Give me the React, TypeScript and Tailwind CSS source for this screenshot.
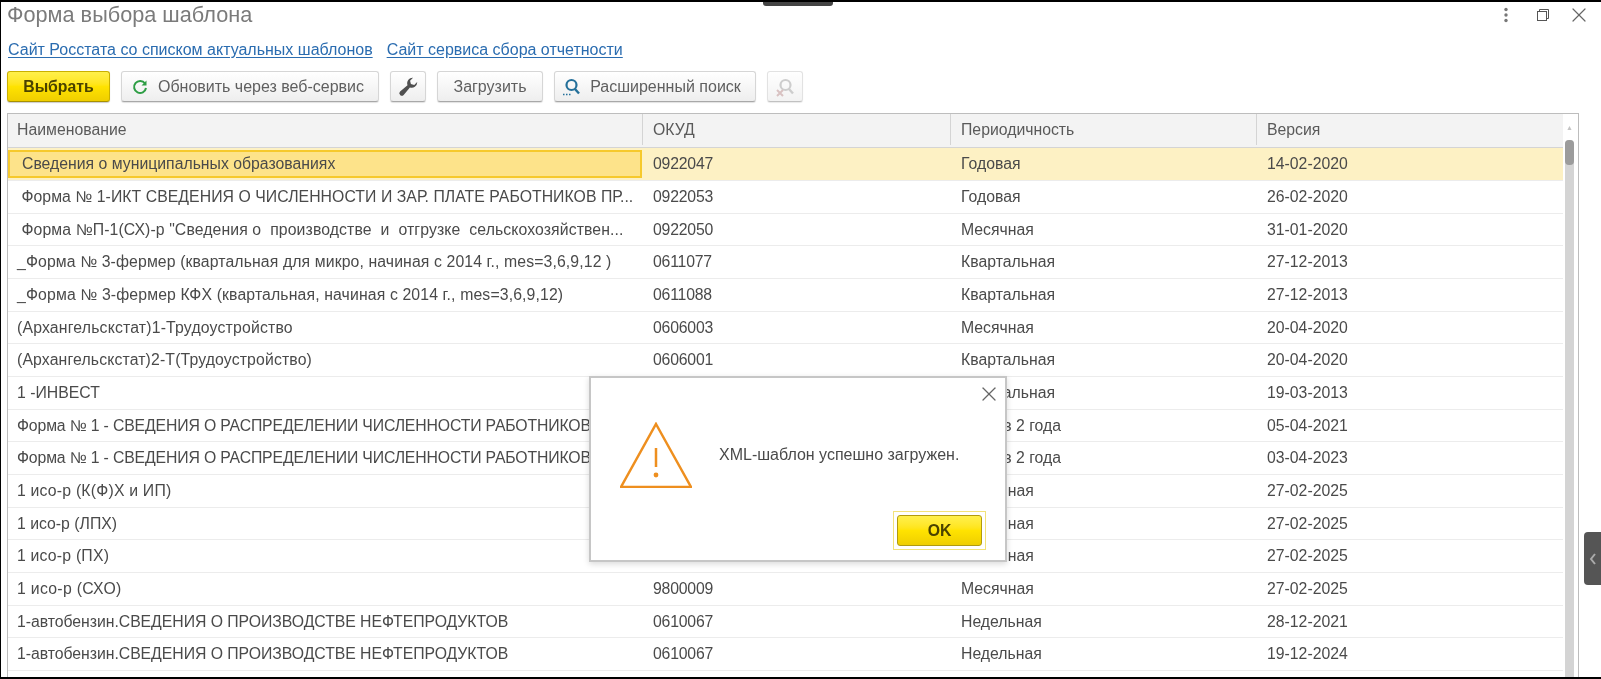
import { X } from 'lucide-react';

const rows = [
  { name: ' Форма № 1-ИКТ СВЕДЕНИЯ О ЧИСЛЕННОСТИ И ЗАР. ПЛАТЕ РАБОТНИКОВ ПР...', code: '0922053', period: 'Годовая', version: '26-02-2020', fit: 'tracking-[0.05px]' },
  { name: ' Форма №П-1(СХ)-р "Сведения о  производстве  и  отгрузке  сельскохозяйствен...', code: '0922050', period: 'Месячная', version: '31-01-2020', fit: 'tracking-[0.1px]' },
  { name: '_Форма № 3-фермер (квартальная для микро, начиная с 2014 г., mes=3,6,9,12 )', code: '0611077', period: 'Квартальная', version: '27-12-2013', fit: 'tracking-[0.11px]' },
  { name: '_Форма № 3-фермер КФХ (квартальная, начиная с 2014 г., mes=3,6,9,12)', code: '0611088', period: 'Квартальная', version: '27-12-2013', fit: 'tracking-[0.13px]' },
  { name: '(Архангельскстат)1-Трудоустройство', code: '0606003', period: 'Месячная', version: '20-04-2020', fit: 'tracking-[0.18px]' },
  { name: '(Архангельскстат)2-Т(Трудоустройство)', code: '0606001', period: 'Квартальная', version: '20-04-2020', fit: 'tracking-[0.14px]' },
  { name: '1 -ИНВЕСТ', code: '0610001', period: 'Квартальная', version: '19-03-2013', fit: '' },
  { name: 'Форма № 1 - СВЕДЕНИЯ О РАСПРЕДЕЛЕНИИ ЧИСЛЕННОСТИ РАБОТНИКОВ', code: '0606010', period: '1 раз в 2 года', version: '05-04-2021', fit: 'tracking-[-0.15px]' },
  { name: 'Форма № 1 - СВЕДЕНИЯ О РАСПРЕДЕЛЕНИИ ЧИСЛЕННОСТИ РАБОТНИКОВ', code: '0606010', period: '1 раз в 2 года', version: '03-04-2023', fit: 'tracking-[-0.15px]' },
  { name: '1 исо-р (К(Ф)Х и ИП)', code: '9800009', period: 'Месячная', version: '27-02-2025', fit: 'tracking-[0.2px]' },
  { name: '1 исо-р (ЛПХ)', code: '9800009', period: 'Месячная', version: '27-02-2025', fit: '' },
  { name: '1 исо-р (ПХ)', code: '9800009', period: 'Месячная', version: '27-02-2025', fit: 'tracking-[0.2px]' },
  { name: '1 исо-р (СХО)', code: '9800009', period: 'Месячная', version: '27-02-2025', fit: 'tracking-[0.3px]' },
  { name: '1-автобензин.СВЕДЕНИЯ О ПРОИЗВОДСТВЕ НЕФТЕПРОДУКТОВ', code: '0610067', period: 'Недельная', version: '28-12-2021', fit: 'tracking-[-0.04px]' },
  { name: '1-автобензин.СВЕДЕНИЯ О ПРОИЗВОДСТВЕ НЕФТЕПРОДУКТОВ', code: '0610067', period: 'Недельная', version: '19-12-2024', fit: 'tracking-[-0.04px]' },
  { name: '', code: '', period: '', version: '', fit: '' },
];

const btn = 'h-[31px] flex items-center justify-center rounded-[3px] border border-[#d6d6d6] border-b-[#a8a8a8] bg-gradient-to-b from-white to-[#eeeeee] shadow-[0_1px_1px_rgba(0,0,0,0.12)] text-[16px] text-[#5f5f5f]';
const yellow = 'rounded-[3px] bg-gradient-to-b from-[#fff04a] via-[#ffe300] to-[#efce00] font-bold text-[15.8px] text-[#4a4200]';

function WarningIcon() {
  return (
    <svg width="72" height="66" viewBox="0 0 72 66" fill="none">
      <path d="M36 2 L71 65 L1 65 Z" stroke="#ee8f1f" strokeWidth="2.5" />
      <path d="M36 26 V45" stroke="#ee8f1f" strokeWidth="2.5" />
      <circle cx="36" cy="53" r="2.4" fill="#ee8f1f" />
    </svg>
  );
}

function SearchIcon({ muted }: { muted?: boolean }) {
  const c = muted ? '#b9b9b9' : '#24709a';
  return (
    <svg width="20" height="20" viewBox="0 0 20 20" fill="none">
      <circle cx="10.5" cy="8" r="5" stroke={c} strokeWidth="2.2" />
      <path d="M14 12 L18 16.5" stroke={c} strokeWidth="2.4" />
      {muted ? (
        <path d="M2 13 L8 19 M8 13 L2 19" stroke="#c9a9a9" strokeWidth="2" />
      ) : (
        <path d="M2 17.5 H10" stroke={c} strokeWidth="1.4" strokeDasharray="1.5 1.5" />
      )}
    </svg>
  );
}

export default function App() {
  return (
    <div className="relative w-[1601px] h-[679px] overflow-hidden bg-white border-l border-t-2 border-b-2 border-black font-['Liberation_Sans',Arial,sans-serif] text-[#444] blur-[0.3px]">
      {/* header */}
      <div className="flex items-center justify-between h-[25px] pl-[6px] pr-[10px]">
        <h1 className="text-[21.7px] text-[#7b7b7b] font-normal leading-none">Форма выбора шаблона</h1>
        <div className="flex items-center">
          <svg width="6" height="16" viewBox="0 0 6 16"><circle cx="3" cy="2.5" r="1.7" fill="#777" /><circle cx="3" cy="8" r="1.7" fill="#777" /><circle cx="3" cy="13.5" r="1.7" fill="#777" /></svg>
          <svg className="ml-[28px]" width="12" height="12" viewBox="0 0 12 12" fill="none" stroke="#555" strokeWidth="1"><rect x="0.5" y="2.5" width="9" height="9" /><path d="M2.5 2.5 V0.5 H11.5 V9.5 H9.500" /></svg>
          <X className="ml-[18px] w-[24px] h-[24px] text-[#666]" strokeWidth={1.2} />
        </div>
      </div>

      {/* links */}
      <div className="flex gap-[14px] pl-[7px] mt-[14px] text-[16px] leading-[17px] text-[#2a6cb0]">
        <a className="underline underline-offset-2">Сайт Росстата со списком актуальных шаблонов</a>
        <a className="underline underline-offset-2">Сайт сервиса сбора отчетности</a>
      </div>

      {/* toolbar */}
      <div className="flex gap-[11px] pl-[6px] mt-[13px]">
        <button className={`${yellow} h-[31px] w-[103px] border border-[#c9b000] border-b-[#a89000] shadow-[0_1px_1px_rgba(0,0,0,0.2)]`}>Выбрать</button>
        <button className={`${btn} w-[258px] gap-[10px] pr-[4px]`}>
          <svg width="16" height="16" viewBox="0 0 16 16" fill="none">
            <path d="M13 4.5 A6 6 0 1 0 14 9" stroke="#2e9e45" strokeWidth="2" />
            <path d="M14.500 1.500 V6.500 H9.500 Z" fill="#2e9e45" />
          </svg>
          Обновить через веб-сервис
        </button>
        <button className={`${btn} w-[36px]`}>
          <svg width="20" height="20" viewBox="0 0 24 24" fill="#4f4f4f">
            <path d="M23 6.500a6.500 6.500 0 0 1-8.700 6.100L6.800 21.500a3 3 0 0 1-4.300-4.200l8.900-7.500A6.500 6.500 0 0 1 18 1l-3.500 3.500 1 4 4 1 3.500-3.500z" />
          </svg>
        </button>
        <button className={`${btn} w-[106px]`}>Загрузить</button>
        <button className={`${btn} w-[202px] gap-[9px] pr-[8px]`}>
          <SearchIcon />
          Расширенный поиск
        </button>
        <button className={`${btn} w-[36px] opacity-70`}>
          <SearchIcon muted />
        </button>
      </div>

      {/* table */}
      <div className="relative ml-[6px] mt-[11px] w-[1572px] h-[600px] border border-[#bdbdbd] border-b-0 text-[15.8px] text-[#4a4a4a]">
        <div className="flex h-[34px] pb-[2px] w-[1555px] bg-[#f3f3f3] border-b border-[#d4d4d4] text-[#5a5a5a]">
          <div className="w-[634px] pl-[9px] flex items-center">Наименование</div>
          <div className="w-[308px] pl-[10px] flex items-center border-l border-[#d4d4d4]">ОКУД</div>
          <div className="w-[306px] pl-[10px] flex items-center border-l border-[#d4d4d4]">Периодичность</div>
          <div className="flex-1 pl-[10px] flex items-center border-l border-[#d4d4d4]">Версия</div>
        </div>

        <div className="w-[1555px]">
          <div className="flex items-center h-[32px] bg-[#fdf1c4]">
            <div className="w-[634px] h-[28px] pl-[12px] flex items-center bg-[#fde38a] border-2 border-[#f6c92c] whitespace-pre">Сведения о муниципальных образованиях</div>
            <div className="w-[308px] pl-[11px] tracking-[-0.2px]">0922047</div>
            <div className="w-[306px] pl-[11px]">Годовая</div>
            <div className="flex-1 pl-[11px]">14-02-2020</div>
          </div>
          {rows.map((r, i) => (
            <div key={i} className="flex h-[32.67px] border-t border-[#ececec]">
              <div className={`w-[634px] pl-[9px] flex items-center whitespace-pre overflow-hidden ${r.fit}`}>{r.name}</div>
              <div className="w-[308px] pl-[11px] flex items-center tracking-[-0.2px]">{r.code}</div>
              <div className="w-[306px] pl-[11px] flex items-center">{r.period}</div>
              <div className="flex-1 pl-[11px] flex items-center">{r.version}</div>
            </div>
          ))}
        </div>

        {/* scrollbar */}
        <div className="absolute top-0 right-[4px] bottom-0 w-[9px] flex flex-col items-center">
          <div className="h-[26px] flex items-center text-[7px] leading-none text-[#c4c4c4]">▲</div>
          <div className="flex-1 w-full bg-[#d4d4d4] rounded-t-[4px]">
            <div className="h-[25px] w-full rounded-[4px] bg-[#9c9c9c]" />
          </div>
        </div>
      </div>

      {/* top handle */}
      <div className="absolute -top-[2px] left-[762px] w-[70px] h-[6px] rounded-b-[3px] bg-[#444]" />
      {/* side handle */}
      <div className="absolute top-[530px] right-0 w-[17px] h-[53px] rounded-l-[4px] bg-[#555] flex items-center justify-center">
        <svg width="8" height="12" viewBox="0 0 8 12" fill="none"><path d="M6 1 L2 6 L6 11" stroke="#aaa" strokeWidth="2" /></svg>
      </div>

      {/* message dialog */}
      <div className="absolute left-[588px] top-[374px] w-[418px] h-[186px] bg-white border-2 border-[#c6c6c6] shadow-[0_2px_6px_rgba(0,0,0,0.15)]">
        <X className="absolute right-[4px] top-[4px] w-[24px] h-[24px] text-[#666]" strokeWidth={1.3} />
        <div className="flex items-center pl-[29px] pt-[44px]">
          <WarningIcon />
          <div className="ml-[27px] text-[16px] text-[#4a4a4a]">XML-шаблон успешно загружен.</div>
        </div>
        <div className="flex justify-end pr-[19px] mt-[23px]">
          <div className="border border-[#f2e27a] p-[3px]">
            <button className={`${yellow} block w-[85px] h-[31px] border border-[#b09a10]`}>OK</button>
          </div>
        </div>
      </div>
    </div>
  );
}
